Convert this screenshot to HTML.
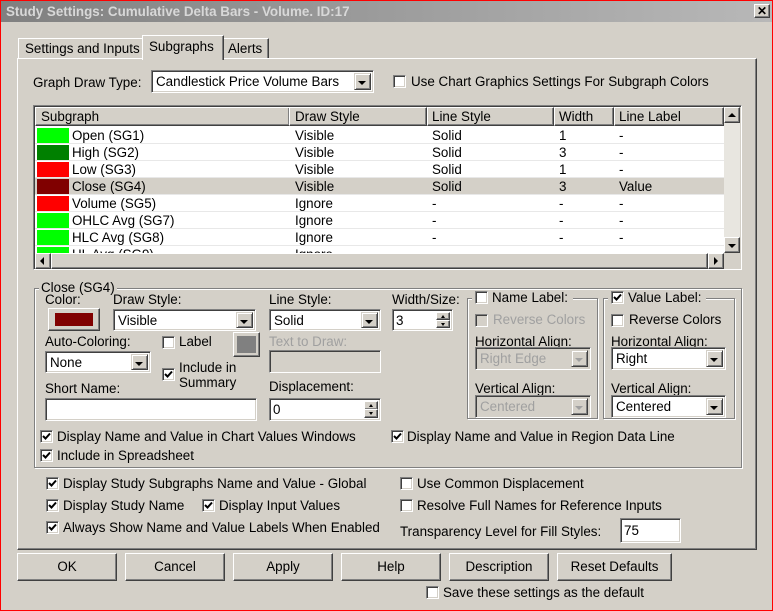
<!DOCTYPE html>
<html><head><meta charset="utf-8"><style>
*{box-sizing:border-box;margin:0;padding:0}
body{width:773px;height:611px;background:#d4d0c8;font:13.4px "Liberation Sans",Arial,sans-serif;color:#000;position:relative;overflow:hidden}
.a{position:absolute;white-space:nowrap;line-height:15px}
.frame{position:absolute;border:1px solid #f00;left:0;top:0;width:773px;height:611px}
.raised{position:absolute;background:#d4d0c8;border-top:1px solid #fff;border-left:1px solid #fff;border-right:1px solid #404040;border-bottom:1px solid #404040;box-shadow:inset -1px -1px 0 #808080}
.sunk{position:absolute;background:#fff;border-top:1px solid #808080;border-left:1px solid #808080;border-right:1px solid #fff;border-bottom:1px solid #fff;box-shadow:inset 1px 1px 0 #404040,inset -1px -1px 0 #d4d0c8}
.sunk.dis{background:#d4d0c8}
.cb{position:absolute;width:13px;height:13px;background:#fff;border-top:1px solid #808080;border-left:1px solid #808080;border-right:1px solid #fff;border-bottom:1px solid #fff;box-shadow:inset 1px 1px 0 #404040,inset -1px -1px 0 #d4d0c8}
.cb.dis{background:#d4d0c8}
.cb svg{position:absolute;left:1px;top:1px}
.group{position:absolute;border:1px solid #808080;box-shadow:1px 1px 0 #fff,inset 1px 1px 0 #fff}
.gt{position:absolute;background:#d4d0c8;padding:0 2px;line-height:15px;white-space:nowrap}
.dd{position:absolute;right:2px;top:2px;bottom:2px;width:17px;background:#d4d0c8;border-top:1px solid #d4d0c8;border-left:1px solid #d4d0c8;border-right:1px solid #404040;border-bottom:1px solid #404040;box-shadow:inset 1px 1px 0 #fff,inset -1px -1px 0 #808080}
.dd:after{content:"";position:absolute;left:3px;top:7px;border-left:4px solid transparent;border-right:4px solid transparent;border-top:4px solid #000}
.dd.g:after{border-top-color:#a0a0a0}
.sel{padding:3px 0 0 4px;line-height:15px;white-space:nowrap}
.btn{position:absolute;height:28px;text-align:center;line-height:26px;background:#d4d0c8;border-top:1px solid #fff;border-left:1px solid #fff;border-right:1px solid #404040;border-bottom:1px solid #404040;box-shadow:inset -1px -1px 0 #808080}
.grey{color:#a0a0a0}
.row{position:absolute;left:0;height:17px;width:689px;border-bottom:1px solid #e8e8e8}
.row span{position:absolute;top:1px;line-height:15px;white-space:nowrap}
.sw{position:absolute;left:2px;top:1px;width:32px;height:15px}
.up:after,.dn:after{content:"";position:absolute;left:4px;border-left:2.5px solid transparent;border-right:2.5px solid transparent}
.up:after{top:2px;border-bottom:3px solid #000}
.dn:after{top:2px;border-top:3px solid #000}
</style></head><body>
<div class="frame"></div>
<div style="position:absolute;left:1px;top:1px;width:771px;height:21px;background:linear-gradient(90deg,#808080,#b8b8b8)"></div>
<div class="a" style="left:6px;top:4px;font-weight:bold;color:#d8d8d8">Study Settings: Cumulative Delta Bars - Volume. ID:17</div>
<div class="raised" style="left:754px;top:4px;width:16px;height:14px;font:bold 12px 'Liberation Sans';text-align:center;line-height:12px">✕</div>

<div class="raised" style="left:18px;top:38px;width:125px;height:22px;border-bottom:none;box-shadow:none"></div>
<div class="a" style="left:25px;top:41px">Settings and Inputs</div>
<div class="raised" style="left:223px;top:38px;width:46px;height:22px;border-bottom:none;box-shadow:inset -1px 0 0 #808080"></div>
<div class="a" style="left:228px;top:41px">Alerts</div>
<div class="raised" style="left:17px;top:58px;width:740px;height:492px"></div>
<div class="raised" style="left:142px;top:35px;width:82px;height:25px;border-bottom:none;box-shadow:inset -1px 0 0 #808080"></div>
<div class="a" style="left:149px;top:39px">Subgraphs</div>

<div class="a" style="left:33px;top:75px">Graph Draw Type:</div>
<div class="sunk" style="left:151px;top:70px;width:223px;height:23px"><div class="sel">Candlestick Price Volume Bars</div><div class="dd"></div></div>
<div class="cb" style="left:393px;top:75px"></div>
<div class="a" style="left:411px;top:74px">Use Chart Graphics Settings For Subgraph Colors</div>

<div class="sunk" style="left:33px;top:105px;width:709px;height:165px;overflow:hidden">
 <div style="position:absolute;left:1px;top:1px;width:689px;height:19px;background:#d4d0c8"></div>
 <div class="raised" style="left:1px;top:1px;width:255px;height:19px"></div><div class="a" style="left:7px;top:3px">Subgraph</div>
 <div class="raised" style="left:255px;top:1px;width:138px;height:19px"></div><div class="a" style="left:261px;top:3px">Draw Style</div>
 <div class="raised" style="left:393px;top:1px;width:127px;height:19px"></div><div class="a" style="left:398px;top:3px">Line Style</div>
 <div class="raised" style="left:520px;top:1px;width:60px;height:19px"></div><div class="a" style="left:525px;top:3px">Width</div>
 <div class="raised" style="left:580px;top:1px;width:110px;height:19px"></div><div class="a" style="left:585px;top:3px">Line Label</div>
 <div style="position:absolute;left:1px;top:21px;width:689px;height:126px">
  <div class="row" style="top:0"><div class="sw" style="background:#00ff00"></div><span style="left:37px">Open (SG1)</span><span style="left:260px">Visible</span><span style="left:397px">Solid</span><span style="left:524px">1</span><span style="left:584px">-</span></div>
  <div class="row" style="top:17px"><div class="sw" style="background:#008000"></div><span style="left:37px">High (SG2)</span><span style="left:260px">Visible</span><span style="left:397px">Solid</span><span style="left:524px">3</span><span style="left:584px">-</span></div>
  <div class="row" style="top:34px"><div class="sw" style="background:#ff0000"></div><span style="left:37px">Low (SG3)</span><span style="left:260px">Visible</span><span style="left:397px">Solid</span><span style="left:524px">1</span><span style="left:584px">-</span></div>
  <div class="row" style="top:51px;background:#d4d0c8"><div class="sw" style="background:#800000"></div><span style="left:37px">Close (SG4)</span><span style="left:260px">Visible</span><span style="left:397px">Solid</span><span style="left:524px">3</span><span style="left:584px">Value</span></div>
  <div class="row" style="top:68px"><div class="sw" style="background:#ff0000"></div><span style="left:37px">Volume (SG5)</span><span style="left:260px">Ignore</span><span style="left:397px">-</span><span style="left:524px">-</span><span style="left:584px">-</span></div>
  <div class="row" style="top:85px"><div class="sw" style="background:#00ff00"></div><span style="left:37px">OHLC Avg (SG7)</span><span style="left:260px">Ignore</span><span style="left:397px">-</span><span style="left:524px">-</span><span style="left:584px">-</span></div>
  <div class="row" style="top:102px"><div class="sw" style="background:#00ff00"></div><span style="left:37px">HLC Avg (SG8)</span><span style="left:260px">Ignore</span><span style="left:397px">-</span><span style="left:524px">-</span><span style="left:584px">-</span></div>
  <div class="row" style="top:119px"><div class="sw" style="background:#00ff00"></div><span style="left:37px">HL Avg (SG9)</span><span style="left:260px">Ignore</span></div>
 </div>
 <div style="position:absolute;left:690px;top:1px;width:16px;height:146px;background:#e8e6e0"></div>
 <div class="raised" style="left:690px;top:1px;width:16px;height:16px"></div>
 <div style="position:absolute;left:694px;top:7px;border-left:4px solid transparent;border-right:4px solid transparent;border-bottom:4px solid #000"></div>
 <div class="raised" style="left:690px;top:131px;width:16px;height:16px"></div>
 <div style="position:absolute;left:694px;top:138px;border-left:4px solid transparent;border-right:4px solid transparent;border-top:4px solid #000"></div>
 <div style="position:absolute;left:1px;top:147px;width:705px;height:16px;background:#e8e6e0"></div>
 <div class="raised" style="left:1px;top:147px;width:16px;height:16px"></div>
 <div style="position:absolute;left:6px;top:151px;border-top:4px solid transparent;border-bottom:4px solid transparent;border-right:4px solid #000"></div>
 <div class="raised" style="left:17px;top:147px;width:657px;height:16px"></div>
 <div class="raised" style="left:674px;top:147px;width:16px;height:16px"></div>
 <div style="position:absolute;left:680px;top:151px;border-top:4px solid transparent;border-bottom:4px solid transparent;border-left:4px solid #000"></div>
 <div style="position:absolute;left:690px;top:147px;width:16px;height:16px;background:#d4d0c8"></div>
</div>

<div class="group" style="left:34px;top:288px;width:708px;height:180px"></div>
<div class="gt" style="left:39px;top:280px">Close (SG4)</div>
<div class="a" style="left:45px;top:292px">Color:</div>
<div class="raised" style="left:48px;top:308px;width:52px;height:23px"><div style="position:absolute;left:6px;top:4px;width:38px;height:13px;background:#800000"></div></div>
<div class="a" style="left:113px;top:292px">Draw Style:</div>
<div class="sunk" style="left:113px;top:309px;width:143px;height:22px"><div class="sel">Visible</div><div class="dd"></div></div>
<div class="a" style="left:269px;top:292px">Line Style:</div>
<div class="sunk" style="left:269px;top:309px;width:112px;height:22px"><div class="sel">Solid</div><div class="dd"></div></div>
<div class="a" style="left:392px;top:292px">Width/Size:</div>
<div class="sunk" style="left:392px;top:309px;width:61px;height:22px"><div class="sel" style="padding-left:3px">3</div>
 <div class="raised up" style="right:2px;top:2px;width:14px;height:8px"></div><div class="raised dn" style="right:2px;top:10px;width:14px;height:8px"></div></div>

<div class="a" style="left:45px;top:334px">Auto-Coloring:</div>
<div class="sunk" style="left:45px;top:351px;width:106px;height:22px"><div class="sel">None</div><div class="dd"></div></div>
<div class="cb" style="left:162px;top:336px"></div><div class="a" style="left:179px;top:334px">Label</div>
<div class="raised" style="left:233px;top:332px;width:27px;height:25px"><div style="position:absolute;left:3px;top:3px;width:19px;height:17px;background:#808080"></div></div>
<div class="a grey" style="left:269px;top:334px">Text to Draw:</div>
<div class="sunk dis" style="left:269px;top:350px;width:112px;height:23px"></div>
<div class="cb" style="left:162px;top:368px"><svg width="9" height="9"><path d="M1 4 L3.5 6.5 L8 1.5" stroke="#000" stroke-width="2" fill="none"/></svg></div>
<div class="a" style="left:179px;top:360px">Include in</div><div class="a" style="left:179px;top:375px">Summary</div>
<div class="a" style="left:45px;top:381px">Short Name:</div>
<div class="sunk" style="left:45px;top:398px;width:212px;height:23px"></div>
<div class="a" style="left:269px;top:379px">Displacement:</div>
<div class="sunk" style="left:269px;top:398px;width:112px;height:23px"><div class="sel" style="padding-left:3px">0</div>
 <div class="raised up" style="right:2px;top:2px;width:14px;height:9px"></div><div class="raised dn" style="right:2px;top:10px;width:14px;height:9px"></div></div>

<div class="group" style="left:467px;top:298px;width:131px;height:121px"></div>
<div class="gt" style="left:472px;top:290px;padding-right:5px"><span style="display:inline-block;width:18px"></span>Name Label:</div>
<div class="cb" style="left:475px;top:291px"></div>
<div class="cb dis" style="left:475px;top:314px"></div><div class="a grey" style="left:493px;top:312px">Reverse Colors</div>
<div class="a" style="left:475px;top:334px">Horizontal Align:</div>
<div class="sunk dis" style="left:475px;top:347px;width:116px;height:23px"><div class="sel grey">Right Edge</div><div class="dd g"></div></div>
<div class="a" style="left:475px;top:381px">Vertical Align:</div>
<div class="sunk dis" style="left:475px;top:395px;width:116px;height:23px"><div class="sel grey">Centered</div><div class="dd g"></div></div>

<div class="group" style="left:603px;top:298px;width:132px;height:121px"></div>
<div class="gt" style="left:608px;top:290px;padding-right:5px"><span style="display:inline-block;width:18px"></span>Value Label:</div>
<div class="cb" style="left:611px;top:291px"><svg width="9" height="9"><path d="M1 4 L3.5 6.5 L8 1.5" stroke="#000" stroke-width="2" fill="none"/></svg></div>
<div class="cb" style="left:611px;top:314px"></div><div class="a" style="left:629px;top:312px">Reverse Colors</div>
<div class="a" style="left:611px;top:334px">Horizontal Align:</div>
<div class="sunk" style="left:611px;top:347px;width:115px;height:23px"><div class="sel">Right</div><div class="dd"></div></div>
<div class="a" style="left:611px;top:381px">Vertical Align:</div>
<div class="sunk" style="left:611px;top:395px;width:115px;height:23px"><div class="sel">Centered</div><div class="dd"></div></div>

<div class="cb" style="left:40px;top:430px"><svg width="9" height="9"><path d="M1 4 L3.5 6.5 L8 1.5" stroke="#000" stroke-width="2" fill="none"/></svg></div>
<div class="a" style="left:57px;top:429px">Display Name and Value in Chart Values Windows</div>
<div class="cb" style="left:391px;top:430px"><svg width="9" height="9"><path d="M1 4 L3.5 6.5 L8 1.5" stroke="#000" stroke-width="2" fill="none"/></svg></div>
<div class="a" style="left:407px;top:429px">Display Name and Value in Region Data Line</div>
<div class="cb" style="left:40px;top:449px"><svg width="9" height="9"><path d="M1 4 L3.5 6.5 L8 1.5" stroke="#000" stroke-width="2" fill="none"/></svg></div>
<div class="a" style="left:57px;top:448px">Include in Spreadsheet</div>

<div class="cb" style="left:46px;top:477px"><svg width="9" height="9"><path d="M1 4 L3.5 6.5 L8 1.5" stroke="#000" stroke-width="2" fill="none"/></svg></div>
<div class="a" style="left:63px;top:476px">Display Study Subgraphs Name and Value - Global</div>
<div class="cb" style="left:46px;top:499px"><svg width="9" height="9"><path d="M1 4 L3.5 6.5 L8 1.5" stroke="#000" stroke-width="2" fill="none"/></svg></div>
<div class="a" style="left:63px;top:498px">Display Study Name</div>
<div class="cb" style="left:202px;top:499px"><svg width="9" height="9"><path d="M1 4 L3.5 6.5 L8 1.5" stroke="#000" stroke-width="2" fill="none"/></svg></div>
<div class="a" style="left:219px;top:498px">Display Input Values</div>
<div class="cb" style="left:46px;top:521px"><svg width="9" height="9"><path d="M1 4 L3.5 6.5 L8 1.5" stroke="#000" stroke-width="2" fill="none"/></svg></div>
<div class="a" style="left:63px;top:520px">Always Show Name and Value Labels When Enabled</div>
<div class="cb" style="left:400px;top:477px"></div>
<div class="a" style="left:417px;top:476px">Use Common Displacement</div>
<div class="cb" style="left:400px;top:499px"></div>
<div class="a" style="left:417px;top:498px">Resolve Full Names for Reference Inputs</div>
<div class="a" style="left:400px;top:524px">Transparency Level for Fill Styles:</div>
<div class="sunk" style="left:620px;top:518px;width:61px;height:25px"><div class="sel" style="padding:4px 0 0 3px">75</div></div>

<div class="btn" style="left:17px;top:553px;width:100px">OK</div>
<div class="btn" style="left:125px;top:553px;width:100px">Cancel</div>
<div class="btn" style="left:233px;top:553px;width:100px">Apply</div>
<div class="btn" style="left:341px;top:553px;width:100px">Help</div>
<div class="btn" style="left:449px;top:553px;width:100px">Description</div>
<div class="btn" style="left:557px;top:553px;width:115px">Reset Defaults</div>
<div class="cb" style="left:426px;top:586px"></div>
<div class="a" style="left:443px;top:585px">Save these settings as the default</div>
</body></html>
